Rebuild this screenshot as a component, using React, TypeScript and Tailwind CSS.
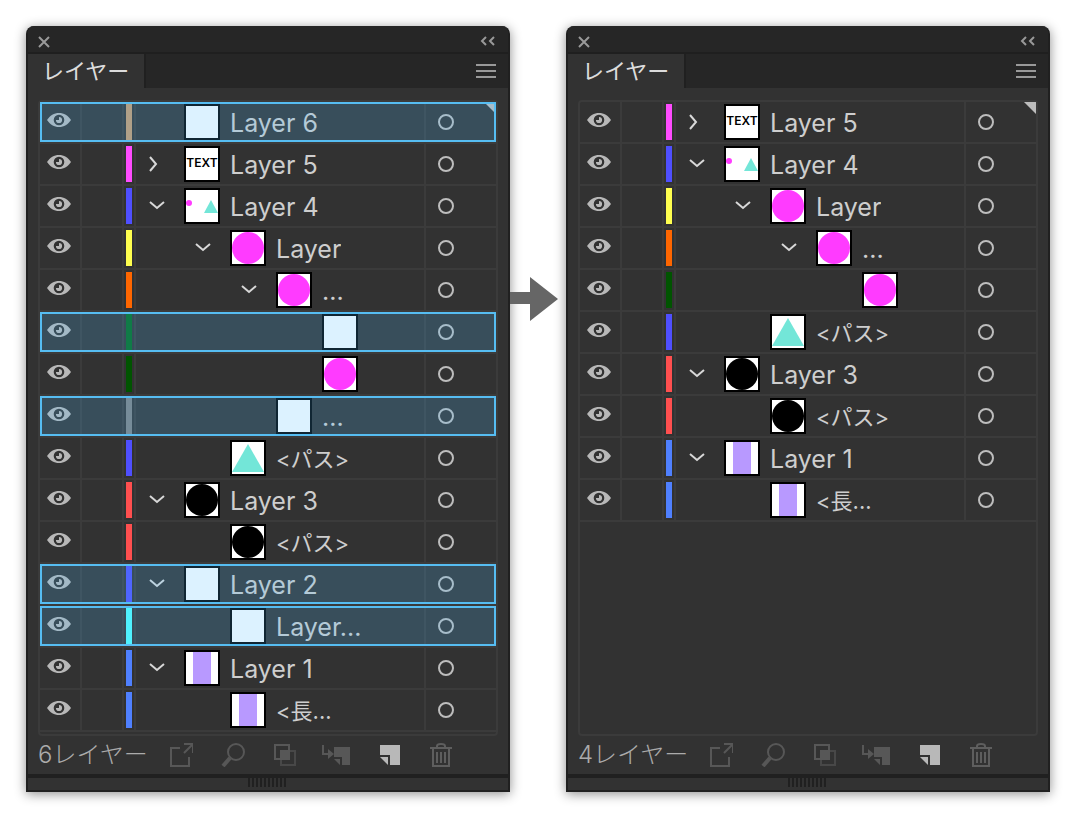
import { clsx } from 'clsx';

type ThumbKind = 'blank' | 'text' | 'mixed' | 'circle' | 'triangle' | 'black' | 'stripe';

type Layer = {
  color: string;
  thumb: ThumbKind;
  name?: string;
  depth?: number;
  state?: 'open' | 'closed';
  selected?: boolean;
};

const MAGENTA = 'bg-[#ff4bff]';
const INDIGO = 'bg-[#4f4fff]';
const YELLOW = 'bg-[#ffff4f]';
const ORANGE = 'bg-[#ff6600]';
const GREEN = 'bg-[#005400]';
const RED = 'bg-[#ff4f4f]';
const BLUE = 'bg-[#4f80ff]';

const before: Layer[] = [
  { name: 'Layer 6', color: 'bg-[#c8996b]', thumb: 'blank', selected: true },
  { name: 'Layer 5', color: MAGENTA, thumb: 'text', state: 'closed' },
  { name: 'Layer 4', color: INDIGO, thumb: 'mixed', state: 'open' },
  { name: 'Layer', color: YELLOW, thumb: 'circle', state: 'open', depth: 1 },
  { name: '...', color: ORANGE, thumb: 'circle', state: 'open', depth: 2 },
  { color: 'bg-[#006b1a]', thumb: 'blank', depth: 3, selected: true },
  { color: GREEN, thumb: 'circle', depth: 3 },
  { name: '...', color: 'bg-[#808080]', thumb: 'blank', depth: 2, selected: true },
  { name: '<パス>', color: INDIGO, thumb: 'triangle', depth: 1 },
  { name: 'Layer 3', color: RED, thumb: 'black', state: 'open' },
  { name: '<パス>', color: RED, thumb: 'black', depth: 1 },
  { name: 'Layer 2', color: INDIGO, thumb: 'blank', state: 'open', selected: true },
  { name: 'Layer...', color: 'bg-[#4fffff]', thumb: 'blank', depth: 1, selected: true },
  { name: 'Layer 1', color: BLUE, thumb: 'stripe', state: 'open' },
  { name: '<長...', color: BLUE, thumb: 'stripe', depth: 1 },
];

const after: Layer[] = [
  { name: 'Layer 5', color: MAGENTA, thumb: 'text', state: 'closed' },
  { name: 'Layer 4', color: INDIGO, thumb: 'mixed', state: 'open' },
  { name: 'Layer', color: YELLOW, thumb: 'circle', state: 'open', depth: 1 },
  { name: '...', color: ORANGE, thumb: 'circle', state: 'open', depth: 2 },
  { color: GREEN, thumb: 'circle', depth: 3 },
  { name: '<パス>', color: INDIGO, thumb: 'triangle', depth: 1 },
  { name: 'Layer 3', color: RED, thumb: 'black', state: 'open' },
  { name: '<パス>', color: RED, thumb: 'black', depth: 1 },
  { name: 'Layer 1', color: BLUE, thumb: 'stripe', state: 'open' },
  { name: '<長...', color: BLUE, thumb: 'stripe', depth: 1 },
];

// Left padding of the name cell for each nesting level
const indents = ['pl-3', 'pl-[58px]', 'pl-[104px]', 'pl-[150px]'];

function EyeIcon() {
  return (
    <svg viewBox="0 0 24 16" className="h-4 w-6" fill="none">
      <path d="M0 8C3 3.500 7 1 12 1s9 2.500 12 7c-3 4.500-7 7-12 7S3 12.500 0 8Z" fill="#b8b8b8" />
      <circle cx="12" cy="8" r="4.200" fill="#b8b8b8" stroke="#323232" strokeWidth="2.200" />
      <path d="M12 8V5h-3v3Z" fill="#323232" />
    </svg>
  );
}

function Thumb({ kind }: { kind: ThumbKind }) {
  return (
    <div className="size-9 shrink-0 border-2 border-black bg-white">
      {kind === 'text' && (
        <span className="flex h-[30px] items-center justify-center text-[12px] font-semibold text-black">TEXT</span>
      )}
      {kind !== 'text' && (
        <svg viewBox="0 0 32 32" className="block size-8">
          {kind === 'circle' && <circle cx="16" cy="16" r="16" fill="#ff3bff" />}
          {kind === 'black' && <circle cx="16" cy="16" r="16" fill="#000" />}
          {kind === 'triangle' && <path d="M16 2 32 30H0Z" fill="#73e6d8" />}
          {kind === 'stripe' && <path d="M7 0h18v32H7Z" fill="#b899ff" />}
          {kind === 'mixed' && (
            <>
              <circle cx="3" cy="13" r="3" fill="#ff3bff" />
              <path d="m25 10 7 13H18Z" fill="#73e6d8" />
            </>
          )}
        </svg>
      )}
    </div>
  );
}

function LayerRow({ layer }: { layer: Layer }) {
  const { name, color, thumb, depth = 0, state, selected } = layer;
  const isObject = name?.startsWith('<');

  return (
    <li className="relative flex h-[42px] border-b-2 border-[#3b3b3b]">
      <button aria-label="Toggle visibility" className="flex w-[42px] shrink-0 justify-start border-r-2 border-[#3b3b3b] pt-[10px] pl-[7px]">
        <EyeIcon />
      </button>
      <div className="w-[42px] shrink-0 border-r-2 border-[#3b3b3b]" />
      <div className="flex w-3 shrink-0 border-r-2 border-[#3b3b3b] px-[2px] py-[2px]">
        <div className={clsx('w-[6px]', color)} />
      </div>
      <div className={clsx('flex min-w-0 flex-1 items-center', indents[depth])}>
        <div className="w-9 shrink-0">
          {state && (
            <button aria-label={state === 'open' ? 'Collapse' : 'Expand'} className="block">
              <svg viewBox="0 0 20 20" className="size-5" fill="none" stroke="#d8d8d8" strokeWidth="2">
                {state === 'open' ? <path d="m2 6 7 6 7-6" /> : <path d="m2 3 6 7-6 7" />}
              </svg>
            </button>
          )}
        </div>
        <Thumb kind={thumb} />
        {name && (
          <span
            className={clsx(
              'truncate pt-[2px] pl-[10px] leading-8 text-[#cecece]',
              isObject ? 'text-[22px]' : 'text-[25px]',
            )}
          >
            {name}
          </span>
        )}
      </div>
      <div className="flex w-[72px] shrink-0 items-center border-l-2 border-[#3b3b3b] pl-3">
        <button aria-label="Target" className="size-4 rounded-full border-2 border-[#bdbdbd]" />
      </div>
      {selected && (
        <div className="pointer-events-none absolute inset-x-0 top-0 h-10 border-2 border-[#56bdf2] bg-[#4ebcff]/20" />
      )}
    </li>
  );
}

function Footer({ count }: { count: number }) {
  return (
    <div className="flex h-[38px] items-center pl-[10px] text-[#575757]">
      <span className="w-[131px] text-[24px] font-light text-[#ababab]">{count}レイヤー</span>
      <div className="flex items-center">
        <button aria-label="Export" className="w-[52px]">
          <svg viewBox="0 0 24 24" className="size-6" fill="none" stroke="currentColor" strokeWidth="2">
            <path d="M11 5H2v18h18v-9M15 1h9v9M24 1 15 10" />
          </svg>
        </button>
        <button aria-label="Locate object" className="w-[52px]">
          <svg viewBox="0 0 24 24" className="size-6" fill="none" stroke="currentColor">
            <circle cx="15" cy="9" r="8" strokeWidth="2" />
            <path d="m9 15-7 8" strokeWidth="4" />
          </svg>
        </button>
        <button aria-label="Clipping mask" className="w-12">
          <svg viewBox="0 0 24 24" className="size-6" fill="none" stroke="currentColor" strokeWidth="2">
            <path d="M2 2h14v14H2Z" />
            <path d="M8 8h8v8H8Z" fill="currentColor" />
            <path d="M16 8h6v14H8v-5" opacity=".6" />
          </svg>
        </button>
        <button aria-label="New sublayer" className="w-14">
          <svg viewBox="0 0 30 24" className="h-6 w-[30px]" fill="currentColor">
            <path d="M2 2v9h6" fill="none" stroke="currentColor" strokeWidth="2" />
            <path d="M7 6v10l6-5Z" />
            <path d="M13 4h16v18h-8v-8h-8Z" />
            <path d="M13 16h6v6Z" />
          </svg>
        </button>
        <button aria-label="New layer" className="w-[52px] text-[#b8b8b8]">
          <svg viewBox="0 0 24 24" className="size-6" fill="currentColor">
            <path d="M3 2h20v20H13V12H3Z" />
            <path d="M3 14h8v8Z" />
          </svg>
        </button>
        <button aria-label="Delete" className="text-[#5e5e5e]">
          <svg viewBox="0 0 24 24" className="size-6" fill="none" stroke="currentColor" strokeWidth="2">
            <path d="M1 5h22M8 5V3q0-2 4-2t4 2v2M4 6v17h16V6M8 9v11M12 9v11M16 9v11" />
          </svg>
        </button>
      </div>
    </div>
  );
}

function LayersPanel({ layers, count }: { layers: Layer[]; count: number }) {
  return (
    <section className="min-w-0 flex-1 overflow-hidden rounded-t-lg border-2 border-t-0 border-[#202020] bg-[#323232] shadow-[0_2px_12px_rgba(0,0,0,0.45)]">
      <div className="flex h-7 items-center justify-between border-b-2 border-[#1f1f1f] bg-[#262626] pt-[6px] pr-3 pl-[9px] text-[#999]">
        <button aria-label="Close">
          <svg viewBox="0 0 14 14" className="size-[14px]" fill="none" stroke="currentColor" strokeWidth="2">
            <path d="m2 2 10 10M12 2 2 12" />
          </svg>
        </button>
        <button aria-label="Collapse panel">
          <svg viewBox="0 0 16 12" className="h-3 w-4" fill="none" stroke="currentColor" strokeWidth="2">
            <path d="M6 1 2 5l4 4M14 1l-4 4 4 4" />
          </svg>
        </button>
      </div>
      <div className="flex h-[34px] justify-between bg-[#262626]">
        <button className="w-[118px] border-r-2 border-[#202020] bg-[#323232] pl-[14px] text-left text-[22px] text-[#dcdcdc]">
          レイヤー
        </button>
        <button aria-label="Panel menu" className="pr-3">
          <svg viewBox="0 0 20 16" className="h-4 w-5" stroke="#999" strokeWidth="2">
            <path d="M0 2h20M0 8h20M0 14h20" />
          </svg>
        </button>
      </div>
      <div className="px-[10px] pt-3">
        <div className="relative min-h-[636px] rounded border-2 border-[#3b3b3b]">
          <svg viewBox="0 0 12 12" className="absolute top-0 right-0 size-3">
            <path d="M0 0h12v12Z" fill="#bdbdbd" />
          </svg>
          <ul>
            {layers.map((layer, i) => (
              <LayerRow key={i} layer={layer} />
            ))}
          </ul>
        </div>
      </div>
      <Footer count={count} />
      <div className="flex h-4 justify-center border-t-4 border-[#202020]">
        <svg viewBox="0 0 40 10" className="h-[10px] w-10" stroke="#202020" strokeWidth="2">
          <path d="M1 0v9M5 0v9M9 0v9M13 0v9M17 0v9M21 0v9M25 0v9M29 0v9M33 0v9M37 0v9" />
        </svg>
      </div>
    </section>
  );
}

export default function App() {
  return (
    <main className="flex min-h-screen items-start bg-white px-[26px] py-[26px] pr-[30px] font-['Inter','Noto_Sans_CJK_JP',sans-serif]">
      <LayersPanel layers={before} count={6} />
      <svg viewBox="0 0 56 44" className="mt-[251px] h-11 w-14 shrink-0">
        <path d="M0 15h20V0l28 22-28 22V27H0Z" fill="#666" />
      </svg>
      <LayersPanel layers={after} count={4} />
    </main>
  );
}
